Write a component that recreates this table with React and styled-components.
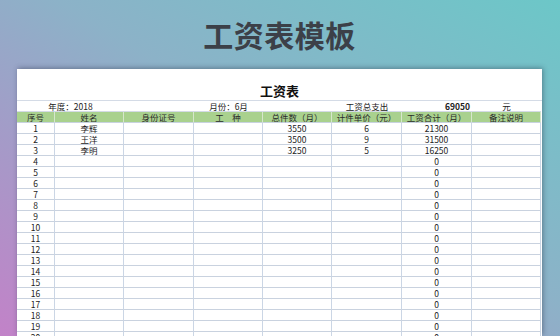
import React from "react";
import styled, { createGlobalStyle } from "styled-components";

const Global = createGlobalStyle`
  html, body { margin: 0; padding: 0; }
  body {
    width: 560px;
    height: 336px;
    overflow: hidden;
    font-family: "Noto Sans CJK SC", "Noto Sans", sans-serif;
  }
`;

const COLS = [38, 69, 70, 69, 69, 70, 70, 69];

const Page = styled.div`
  width: 560px;
  height: 336px;
  overflow: hidden;
  background: linear-gradient(to top right, #c282c8 0%, #a49bc8 30%, #8cb2c8 55%, #6cc7c8 100%);
  display: flex;
  flex-direction: column;
  padding: 0 18px 0 17px;
  box-sizing: border-box;
`;

const Banner = styled.h1`
  margin: 0;
  height: 69px;
  display: flex;
  align-items: center;
  justify-content: center;
  font-size: 30px;
  font-weight: 700;
  color: #3c4048;
  letter-spacing: 0.5px;
  padding-bottom: 1px;
  box-sizing: border-box;
`;

const Sheet = styled.div`
  background: #ffffff;
  flex: 1;
  box-shadow: 1px -1px 5px rgba(40, 50, 70, 0.45);
  overflow: hidden;
`;

const SheetTitle = styled.div`
  height: 32px;
  display: flex;
  align-items: flex-end;
  justify-content: center;
  font-size: 13px;
  font-weight: 700;
  color: #111;
  line-height: 16px;
  padding-bottom: 1px;
  box-sizing: border-box;
  border-bottom: 1px solid #d4dbe6;
`;

const Grid = styled.div`
  display: grid;
  grid-template-columns: ${COLS.map((c) => c + "px").join(" ")};
  grid-auto-rows: 11px;
  font-size: 8.5px;
  color: #222;
`;

const InfoCell = styled.div`
  grid-column: span ${(p) => p.$span || 1};
  display: flex;
  align-items: center;
  justify-content: ${(p) => (p.$right ? "flex-end" : "center")};
  padding-right: ${(p) => (p.$right ? "2px" : "0")};
  font-weight: ${(p) => (p.$bold ? 700 : 400)};
  border-bottom: 1px solid #d4dbe6;
  box-sizing: border-box;
  line-height: 1;
  white-space: nowrap;
`;

const HeadCell = styled.div`
  background: #a9d18e;
  display: flex;
  align-items: center;
  justify-content: center;
  border-right: 1px solid #d6e6cc;
  border-bottom: 1px solid #c8d3e0;
  box-sizing: border-box;
  line-height: 1;
  white-space: nowrap;
  color: #2a2a2a;
`;

const Cell = styled.div`
  display: flex;
  align-items: center;
  justify-content: center;
  border-right: 1px solid #cbd6e5;
  border-bottom: 1px solid #c9d2df;
  box-sizing: border-box;
  line-height: 1;
  white-space: nowrap;
`;

const headers = ["序号", "姓名", "身份证号", "工　种", "总件数（月）", "计件单价（元）", "工资合计（月）", "备注说明"];

const data = [
  ["1", "李辉", "", "", "3550", "6", "21300", ""],
  ["2", "王洋", "", "", "3500", "9", "31500", ""],
  ["3", "李明", "", "", "3250", "5", "16250", ""],
];
for (let i = 4; i <= 22; i++) data.push([String(i), "", "", "", "", "", "0", ""]);

export default function App() {
  return (
    <>
      <Global />
      <Page>
        <Banner>工资表模板</Banner>
        <Sheet>
          <SheetTitle>工资表</SheetTitle>
          <Grid>
            <InfoCell $span={2}>年度：2018</InfoCell>
            <InfoCell />
            <InfoCell>月份：6月</InfoCell>
            <InfoCell />
            <InfoCell>工资总支出</InfoCell>
            <InfoCell $right $bold>69050</InfoCell>
            <InfoCell>元</InfoCell>
            {headers.map((h) => (
              <HeadCell key={h}>{h}</HeadCell>
            ))}
            {data.map((row, r) =>
              row.map((v, c) => <Cell key={r + "-" + c}>{v}</Cell>)
            )}
          </Grid>
        </Sheet>
      </Page>
    </>
  );
}
